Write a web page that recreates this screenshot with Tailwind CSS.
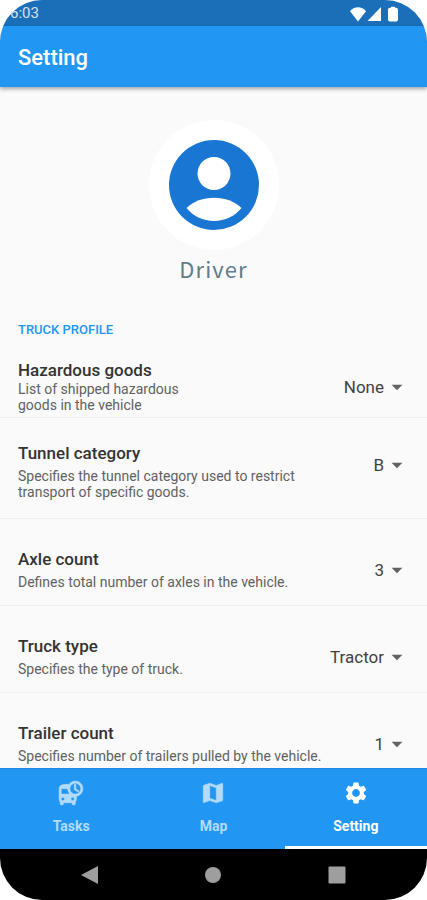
<!DOCTYPE html>
<html lang="en">
<head>
  <meta charset="UTF-8" />
  <meta name="viewport" content="width=device-width, initial-scale=1.0"/>
  <title>Setting</title>
  <script src="https://cdn.jsdelivr.net/npm/@tailwindcss/browser@4"></script>
</head>
<body class="bg-white font-['Roboto',sans-serif]">
  <div class="flex h-screen flex-col overflow-hidden rounded-[42px] bg-[#fafafa]">

    <!-- Status bar -->
    <div class="flex h-[26px] shrink-0 items-center justify-between bg-[#1a6fb8] pt-px pr-[27px] pl-[10px]">
      <span class="text-[15px] text-white/80">6:03</span>
      <div class="flex items-center text-white">
        <svg class="h-4 w-[18px]" viewBox="0 0 18 16" fill="currentColor" aria-hidden="true"><path d="M9 15.5 1 5.2C3 2.6 6 1.3 9 1.3s6 1.3 8 3.9z"/></svg>
        <svg class="h-4 w-[15px]" viewBox="0 0 15 16" fill="currentColor" aria-hidden="true"><path d="M14 1v14H.5z"/></svg>
        <svg class="ml-1 h-4 w-[14px]" viewBox="0 0 14 16" fill="currentColor" aria-hidden="true"><path d="M5 .8h4v.9h1c1.2 0 2 .8 2 1.9v10c0 1.1-.6 1.9-1.7 1.9H3.7C2.6 15.5 2 14.7 2 13.6v-10c0-1.1.8-1.9 2-1.9h1z"/></svg>
      </div>
    </div>

    <!-- App bar -->
    <header class="z-10 flex h-[61px] shrink-0 items-center bg-[#2196f3] px-[18px] pt-[2px] shadow-[0_2px_4px_rgba(0,0,0,0.35)]">
      <h1 class="text-[22px] font-medium text-white">Setting</h1>
    </header>

    <main class="min-h-0 flex-1 overflow-y-auto [scrollbar-width:none]">
      <!-- Profile -->
      <section class="flex flex-col items-center pt-[33px]">
        <div class="flex size-[130px] items-center justify-center rounded-full bg-white">
          <svg class="size-[90px]" viewBox="0 0 90 90" aria-hidden="true">
            <circle cx="45" cy="45" r="45" fill="#1976d2"/>
            <circle cx="45" cy="33.5" r="16.5" fill="#fff"/>
            <path fill="#fff" d="M17.5 68C25 61 34 57.7 45 57.7S65 61 72.5 68C66 76 56 81 45 81s-21-5-27.5-13z"/>
          </svg>
        </div>
        <p class="font-['Noto_Sans_CJK_JP',sans-serif] text-[22px] leading-9 tracking-wider text-[#607d8b]">Driver</p>
      </section>

      <h2 class="mt-9 px-[18px] text-[13px] leading-4 font-medium text-[#2196f3]">TRUCK PROFILE</h2>

      <!-- Truck settings -->
      <div class="flex items-center justify-between border-b border-[#f0f0f0] pt-[22px] pr-[17px] pb-1 pl-[18px]">
        <div class="w-[190px]">
          <label for="hazard" class="block text-[17px] leading-5 font-medium text-[#333333]">Hazardous goods</label>
          <p class="mt-px text-sm leading-4 text-[#616161]">List of shipped hazardous goods in the vehicle</p>
        </div>
        <div class="flex items-center">
          <select id="hazard" class="field-sizing-content appearance-none bg-transparent text-[17px] leading-6 text-[#424242]">
            <option>None</option>
          </select>
          <svg class="size-[26px]" viewBox="0 0 24 24" fill="#616161" aria-hidden="true"><path d="m7 10 5 5 5-5z"/></svg>
        </div>
      </div>

      <div class="flex items-center justify-between border-b border-[#f0f0f0] pt-[25px] pr-[17px] pb-[18px] pl-[18px]">
        <div class="w-[300px]">
          <label for="tunnel" class="block text-[17px] leading-5 font-medium text-[#333333]">Tunnel category</label>
          <p class="mt-[5px] text-sm leading-4 text-[#616161]">Specifies the tunnel category used to restrict transport of specific goods.</p>
        </div>
        <div class="flex items-center pb-[14px]">
          <select id="tunnel" class="field-sizing-content appearance-none bg-transparent text-[17px] leading-6 text-[#424242]">
            <option>B</option>
          </select>
          <svg class="size-[26px]" viewBox="0 0 24 24" fill="#616161" aria-hidden="true"><path d="m7 10 5 5 5-5z"/></svg>
        </div>
      </div>

      <div class="flex items-center justify-between border-b border-[#f0f0f0] pt-[30px] pr-[17px] pb-[15px] pl-[18px]">
        <div>
          <label for="axle" class="block text-[17px] leading-5 font-medium text-[#333333]">Axle count</label>
          <p class="mt-[5px] text-sm leading-4 text-[#616161]">Defines total number of axles in the vehicle.</p>
        </div>
        <div class="flex items-center">
          <select id="axle" class="field-sizing-content appearance-none bg-transparent text-[17px] leading-6 text-[#424242]">
            <option>3</option>
          </select>
          <svg class="size-[26px]" viewBox="0 0 24 24" fill="#616161" aria-hidden="true"><path d="m7 10 5 5 5-5z"/></svg>
        </div>
      </div>

      <div class="flex items-center justify-between border-b border-[#f0f0f0] pt-[30px] pr-[17px] pb-[15px] pl-[18px]">
        <div>
          <label for="type" class="block text-[17px] leading-5 font-medium text-[#333333]">Truck type</label>
          <p class="mt-[5px] text-sm leading-4 text-[#616161]">Specifies the type of truck.</p>
        </div>
        <div class="flex items-center">
          <select id="type" class="field-sizing-content appearance-none bg-transparent text-[17px] leading-6 text-[#424242]">
            <option>Tractor</option>
          </select>
          <svg class="size-[26px]" viewBox="0 0 24 24" fill="#616161" aria-hidden="true"><path d="m7 10 5 5 5-5z"/></svg>
        </div>
      </div>

      <div class="flex items-center justify-between pt-[30px] pr-[17px] pb-[15px] pl-[18px]">
        <div>
          <label for="trailer" class="block text-[17px] leading-5 font-medium text-[#333333]">Trailer count</label>
          <p class="mt-[5px] text-sm leading-4 text-[#616161]">Specifies number of trailers pulled by the vehicle.</p>
        </div>
        <div class="flex items-center">
          <select id="trailer" class="field-sizing-content appearance-none bg-transparent text-[17px] leading-6 text-[#424242]">
            <option>1</option>
          </select>
          <svg class="size-[26px]" viewBox="0 0 24 24" fill="#616161" aria-hidden="true"><path d="m7 10 5 5 5-5z"/></svg>
        </div>
      </div>
    </main>

    <!-- Tabs -->
    <nav class="grid h-[81px] shrink-0 grid-cols-3 border-t border-[#1e88e5] bg-[#2196f3] text-sm font-bold text-[#b3dbfb]">
      <a href="#tasks" class="flex flex-col items-center gap-[10px] border-b-[3px] border-transparent pt-[11px]">
        <svg class="size-[26px]" viewBox="0 0 24 24" fill="currentColor" stroke="currentColor" stroke-width=".5" aria-hidden="true"><path d="M16 1c-2.4 0-4.52 1.21-5.78 3.05.01-.01.01-.02.02-.03C9.84 4 9.42 4 9 4c-4.42 0-8 .5-8 4v10c0 .88.39 1.67 1 2.22V22c0 .55.45 1 1 1h1c.55 0 1-.45 1-1v-1h8v1c0 .55.45 1 1 1h1c.55 0 1-.45 1-1v-1.78c.61-.55 1-1.34 1-2.22v-3.08c3.39-.49 6-3.39 6-6.92 0-3.87-3.13-7-7-7zM4.5 19c-.83 0-1.5-.67-1.5-1.5S3.67 16 4.5 16s1.5.67 1.5 1.5S5.33 19 4.5 19zM3 13V8h6c0 1.96.81 3.73 2.11 5H3zm10.5 6c-.83 0-1.5-.67-1.5-1.5s.67-1.5 1.5-1.5 1.5.67 1.5 1.5-.67 1.5-1.5 1.5zm2.5-6c-2.76 0-5-2.24-5-5s2.24-5 5-5 5 2.24 5 5-2.24 5-5 5zm.5-9H15v5l3.62 2.16.75-1.23-2.87-1.68V4z"/></svg>
        Tasks
      </a>
      <a href="#map" class="flex flex-col items-center gap-[10px] border-b-[3px] border-transparent pt-[11px]">
        <svg class="size-[26px]" viewBox="0 0 24 24" fill="currentColor" stroke="currentColor" stroke-width=".5" aria-hidden="true"><path d="m20.5 3-.16.03L15 5.1 9 3 3.36 4.9c-.21.07-.36.25-.36.48V20.5c0 .28.22.5.5.5l.16-.03L9 18.9l6 2.1 5.64-1.9c.21-.07.36-.25.36-.48V3.5c0-.28-.22-.5-.5-.5zM15 19l-6-2.11V5l6 2.11V19z"/></svg>
        Map
      </a>
      <a href="#setting" class="flex flex-col items-center gap-[10px] border-b-[3px] border-white pt-[11px] text-white" aria-current="page">
        <svg class="size-[26px]" viewBox="0 0 24 24" fill="currentColor" aria-hidden="true"><path d="M19.14 12.94c.04-.3.06-.61.06-.94 0-.32-.02-.64-.07-.94l2.03-1.58c.18-.14.23-.41.12-.61l-1.92-3.32c-.12-.22-.37-.29-.59-.22l-2.39.96c-.5-.38-1.03-.7-1.62-.94l-.36-2.54c-.04-.24-.24-.41-.48-.41h-3.84c-.24 0-.43.17-.47.41l-.36 2.54c-.59.24-1.13.57-1.62.94l-2.39-.96c-.22-.08-.47 0-.59.22L2.74 8.87c-.12.21-.08.47.12.61l2.03 1.58c-.05.3-.09.63-.09.94s.02.64.07.94l-2.03 1.58c-.18.14-.23.41-.12.61l1.92 3.32c.12.22.37.29.59.22l2.39-.96c.5.38 1.03.7 1.62.94l.36 2.54c.05.24.24.41.48.41h3.84c.24 0 .44-.17.47-.41l.36-2.54c.59-.24 1.13-.56 1.62-.94l2.39.96c.22.08.47 0 .59-.22l1.92-3.32c.12-.22.07-.47-.12-.61l-2.01-1.58zM12 15.6c-1.98 0-3.6-1.62-3.6-3.6s1.62-3.6 3.6-3.6 3.6 1.62 3.6 3.6-1.62 3.6-3.6 3.6z"/></svg>
        Setting
      </a>
    </nav>

    <!-- System buttons -->
    <div class="grid h-[51px] shrink-0 grid-cols-3 items-center justify-items-center bg-black px-7 text-[#9e9e9e]">
      <button type="button" aria-label="Back">
        <svg class="size-[18px]" viewBox="0 0 18 18" fill="currentColor"><path d="M17 0v18L0 9z"/></svg>
      </button>
      <button type="button" aria-label="Home">
        <svg class="size-[18px]" viewBox="0 0 18 18" fill="currentColor"><circle cx="9" cy="9" r="8"/></svg>
      </button>
      <button type="button" aria-label="Recent apps">
        <svg class="size-[18px]" viewBox="0 0 18 18" fill="currentColor"><rect x=".5" y=".5" width="17" height="17" rx="1"/></svg>
      </button>
    </div>
  </div>
</body>
</html>
